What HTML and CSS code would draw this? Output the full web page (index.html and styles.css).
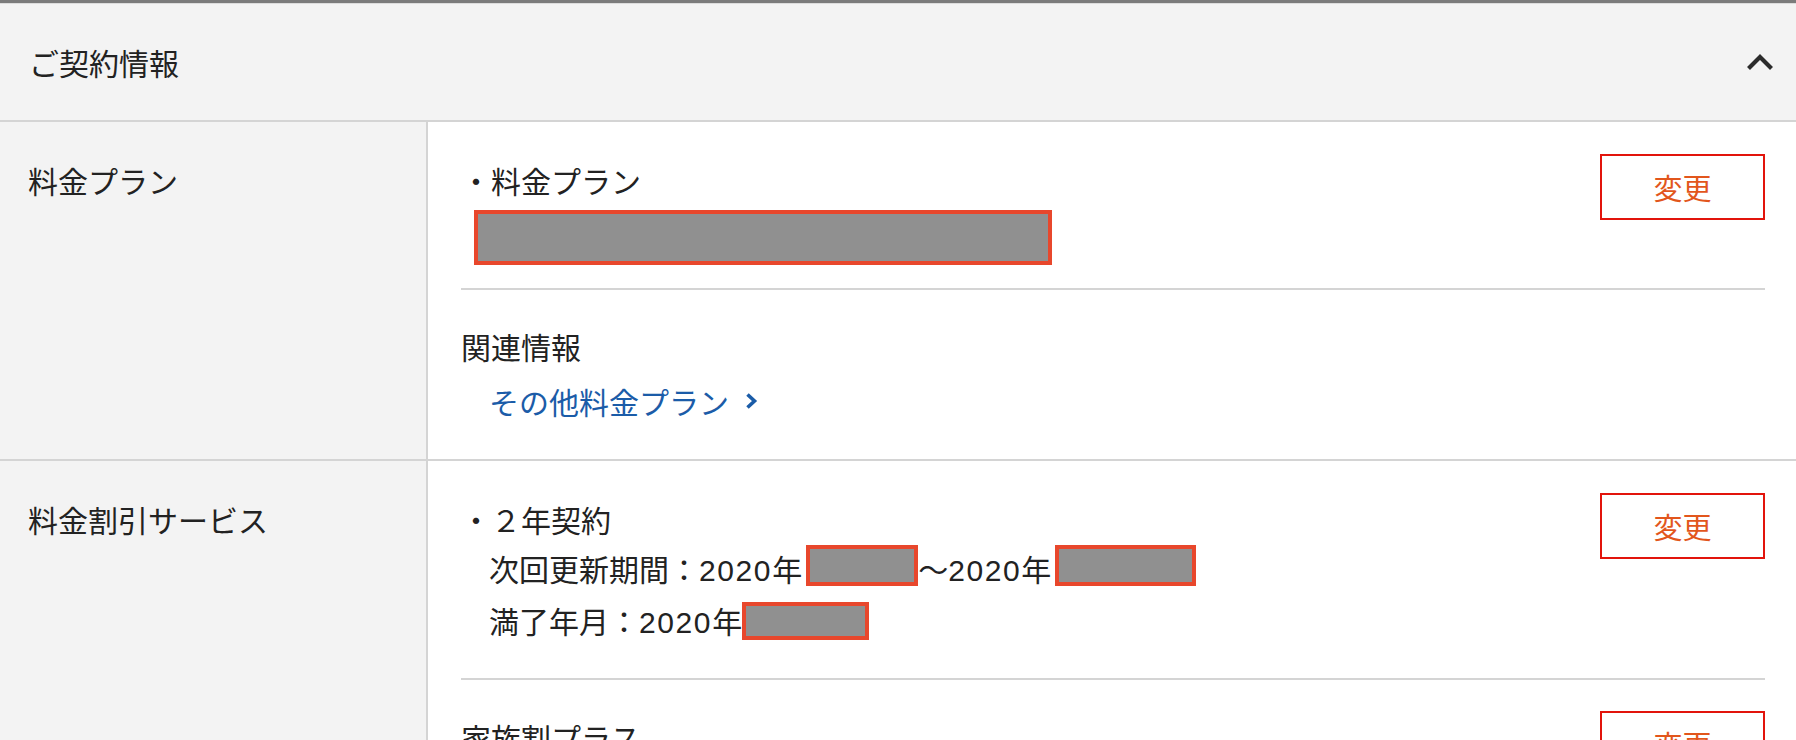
FILE: index.html
```html
<!DOCTYPE html>
<html lang="ja">
<head>
  <meta charset="UTF-8" />
  <meta name="viewport" content="width=device-width, initial-scale=1" />
  <title>ご契約情報</title>
  <link rel="stylesheet" href="styles.css">
</head>
<body>
  <div class="topbar"></div>
  <section class="panel">
    <div class="panel-head">
      <h2>ご契約情報</h2>
      <svg class="toggle" width="28" height="18" viewBox="0 0 28 18">
        <polyline points="2.5,15.5 14,4 25.5,15.5" fill="none" stroke="#2b2b2b" stroke-width="4.2" />
      </svg>
    </div>

    <div class="row">
      <div class="row-label">料金プラン</div>
      <div class="row-body">
        <div class="item item-plan">
          <div class="item-text">
            <p>・料金プラン</p>
            <span class="mask mask-plan"></span>
          </div>
          <button class="btn-change">変更</button>
        </div>
        <div class="item item-related">
          <div class="item-text">
            <p>関連情報</p>
            <a class="link" href="#">その他料金プラン
              <svg width="13" height="18" viewBox="0 0 13 18">
                <polyline points="2.5,2.5 9.5,9 2.5,15.5" fill="none" stroke="#1b5ca8" stroke-width="3.6" />
              </svg>
            </a>
          </div>
        </div>
      </div>
    </div>

    <div class="row">
      <div class="row-label">料金割引サービス</div>
      <div class="row-body">
        <div class="item item-discount">
          <div class="item-text">
            <p>・２年契約</p>
            <p class="indent">次回更新期間：<span class="num">2020</span>年<span class="mask mask-a"></span>〜<span class="num">2020</span>年<span class="mask mask-b"></span></p>
            <p class="indent">満了年月：<span class="num">2020</span>年<span class="mask mask-c"></span></p>
          </div>
          <button class="btn-change">変更</button>
        </div>
        <div class="item item-family">
          <div class="item-text">
            <p>家族割プラス</p>
            <p class="indent">ご家族の人数：3人</p>
          </div>
          <button class="btn-change">変更</button>
        </div>
      </div>
    </div>
  </section>
</body>
</html>
```

FILE: styles.css
```css
body {
  margin: 0;
  font-family: "Noto Sans CJK JP", "Noto Sans", sans-serif;
  color: #222;
  background: #fff;
  overflow: hidden;
}
.topbar {
  height: 3px;
  background: #7b7b7b;
}
.panel-head {
  display: flex;
  align-items: center;
  justify-content: space-between;
  height: 116px;
  padding: 0 22px 0 29px;
  background: #f3f3f3;
  border-top: 1px solid #dcdcdc;
  border-bottom: 2px solid #d4d4d4;
}
.panel-head h2 {
  margin: 0;
  font-size: 30px;
  font-weight: normal;
  line-height: 1;
}
.row {
  display: flex;
  border-bottom: 2px solid #d4d4d4;
}
.row-label {
  width: 398px;
  flex-shrink: 0;
  padding: 32px 0 0 28px;
  background: #f3f3f3;
  border-right: 2px solid #d4d4d4;
  font-size: 30px;
  line-height: 52px;
}
.row-body {
  flex: 1;
  padding: 0 31px 0 33px;
}
.item {
  display: flex;
  justify-content: space-between;
  align-items: flex-start;
  border-bottom: 2px solid #d4d4d4;
}
.item:last-child {
  border-bottom: none;
}
.item-text p {
  margin: 0;
  font-size: 30px;
  line-height: 52px;
}
.item-text .indent {
  padding-left: 28px;
  font-family: "Liberation Sans", "Noto Sans CJK JP", sans-serif;
}
.num {
  letter-spacing: 1.6px;
}
.item-plan {
  padding: 32px 0 23px;
}
.item-related {
  padding: 30px 0 32px;
}
.item-discount {
  padding: 32px 0 29px;
}
.item-family {
  padding: 31px 0 40px;
}
.mask {
  display: inline-block;
  box-sizing: border-box;
  background: #909090;
  border: 4px solid #e8472c;
}
.mask-plan {
  display: block;
  width: 578px;
  height: 55px;
  margin: 4px 0 0 13px;
}
.mask-a {
  width: 112px;
  height: 41px;
  margin-left: 4px;
  vertical-align: top;
}
.mask-b {
  width: 141px;
  height: 41px;
  margin-left: 4px;
  vertical-align: top;
}
.mask-c {
  width: 127px;
  height: 38px;
  vertical-align: -7px;
}
.link {
  display: inline-flex;
  align-items: center;
  gap: 16px;
  margin-top: 3px;
  padding-left: 28px;
  font-size: 30px;
  line-height: 52px;
  color: #1b5ca8;
  text-decoration: none;
}
.btn-change {
  width: 165px;
  height: 66px;
  flex-shrink: 0;
  background: #fff;
  border: 2px solid #e2140c;
  color: #e2561c;
  font-family: inherit;
  font-size: 29px;
  cursor: pointer;
}
```
